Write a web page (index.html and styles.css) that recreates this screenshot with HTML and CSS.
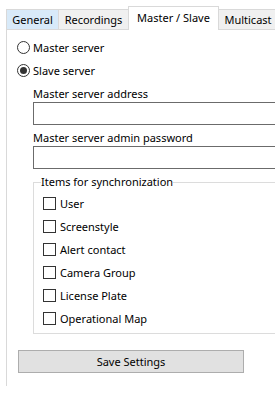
FILE: index.html
```html
<!DOCTYPE html>
<html lang="en">
<head>
<meta charset="utf-8">
<title>Master / Slave</title>
<link rel="stylesheet" href="styles.css">
</head>
<body>
  <div class="tabs">
    <div class="tab hover">General</div>
    <div class="tab">Recordings</div>
    <div class="tab active">Master / Slave</div>
    <div class="tab">Multicast</div>
  </div>
  <div class="panel">
    <label class="radio-row"><span class="radio"></span>Master server</label>
    <label class="radio-row"><span class="radio checked"></span>Slave server</label>

    <div class="slave-settings">
      <div class="field-label">Master server address</div>
      <div class="textbox"></div>
      <div class="field-label second">Master server admin password</div>
      <div class="textbox"></div>

      <fieldset class="group">
        <legend>Items for synchronization</legend>
        <label class="check-row"><span class="checkbox"></span>User</label>
        <label class="check-row"><span class="checkbox"></span>Screenstyle</label>
        <label class="check-row"><span class="checkbox"></span>Alert contact</label>
        <label class="check-row"><span class="checkbox"></span>Camera Group</label>
        <label class="check-row"><span class="checkbox"></span>License Plate</label>
        <label class="check-row"><span class="checkbox"></span>Operational Map</label>
      </fieldset>
    </div>

    <div class="button">Save Settings</div>
  </div>
</body>
</html>
```

FILE: styles.css
```css
html, body {
  margin: 0;
  background: #ffffff;
  overflow: hidden;
}
body {
  width: 275px;
  height: 393px;
  font-family: "Noto Sans", "Open Sans", sans-serif;
  font-size: 11px;
  color: #000000;
}

/* tab strip */
.tabs {
  display: flex;
  align-items: flex-end;
  padding: 6px 0 0 6px;
  margin-bottom: -1px;
  position: relative;
  z-index: 1;
  width: 340px;
}
.tab {
  box-sizing: border-box;
  height: 20px;
  margin-bottom: 1px;
  margin-left: -1px;
  border: 1px solid #d9d9d9;
  border-bottom: 0;
  background: #f0f0f0;
  display: flex;
  align-items: center;
  justify-content: center;
  white-space: nowrap;
}
.tab:first-child {
  margin-left: 0;
}
.tab:nth-child(1) { width: 53px; }
.tab:nth-child(2) { width: 71px; }
.tab:nth-child(3) { width: 91px; }
.tab:nth-child(4) { width: 60px; }
.tab.hover {
  background: #d8eaf9;
}
.tab.active {
  height: 24px;
  margin-bottom: 0;
  padding-bottom: 3px;
  background: #ffffff;
}

/* page body */
.panel {
  box-sizing: border-box;
  width: 340px;
  height: 357px;
  margin-left: 6px;
  border-top: 1px solid #d9d9d9;
  border-left: 1px solid #d9d9d9;
  padding: 6px 0 0 10px;
}

.radio-row,
.check-row {
  display: flex;
  align-items: center;
  height: 23px;
  white-space: nowrap;
}
.radio {
  box-sizing: border-box;
  width: 13px;
  height: 13px;
  margin-right: 3px;
  border: 1px solid #333333;
  border-radius: 50%;
  display: flex;
  align-items: center;
  justify-content: center;
}
.radio.checked::after {
  content: "";
  width: 7px;
  height: 7px;
  border-radius: 50%;
  background: #333333;
}

.slave-settings {
  margin: 4px 0 0 16px;
}
.field-label {
  line-height: 16px;
}
.field-label.second {
  margin-top: 5px;
}
.textbox {
  box-sizing: border-box;
  height: 23px;
  border: 1px solid #6b6b6b;
  background: #ffffff;
}

.group {
  margin: 5px 0 0;
  padding: 0 0 3px 7px;
  border: 1px solid #dcdcdc;
  min-width: 0;
}
.group legend {
  padding: 0;
  line-height: 16px;
}
.check-row {
  margin-left: 2px;
}
.check-row:first-of-type {
  margin-top: 2px;
}
.checkbox {
  box-sizing: border-box;
  width: 13px;
  height: 13px;
  margin-right: 4px;
  border: 1px solid #333333;
  background: #ffffff;
}

.button {
  box-sizing: border-box;
  width: 226px;
  height: 23px;
  margin: 16px 0 0 1px;
  border: 1px solid #adadad;
  background: #e1e1e1;
  display: flex;
  align-items: center;
  justify-content: center;
}
```
